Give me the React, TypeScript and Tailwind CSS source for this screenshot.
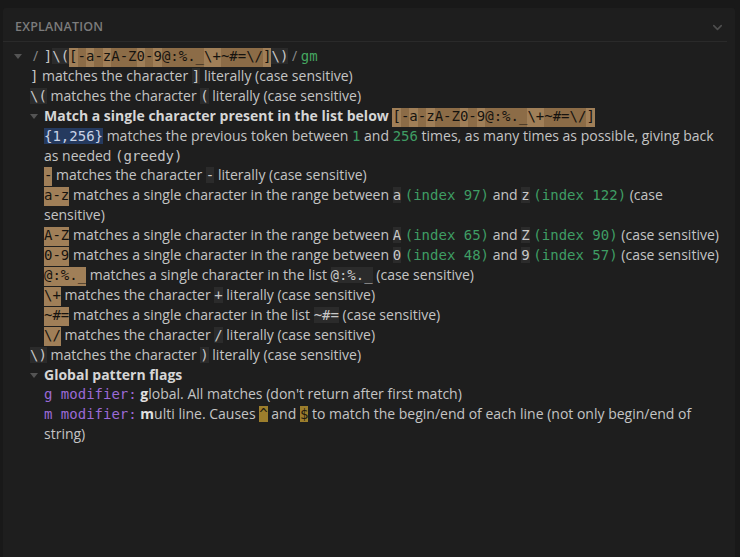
import { ChevronDown } from "lucide-react";
import type { ReactNode } from "react";

const mono = "font-['DejaVu_Sans_Mono',monospace] text-[14px] leading-none";
const chip = `${mono} bg-[#2b2b2b] text-[#c8c8c8]`;
const tan = `${mono} bg-[#a07f58] text-[#16130f] pb-[3px]`;
const tanDark = `${mono} bg-[#8c6c47] text-[#16130f] pb-[3px]`;
const green = `${mono} text-[#3f9d64]`;
const purple = `${mono} text-[#9b6ad6]`;

function Caret() {
  return (
    <svg width="8" height="5" viewBox="0 0 8 5" className="mt-[8px] shrink-0">
      <polygon points="0,0 8,0 4,5" fill="#545454" />
    </svg>
  );
}

function Line({ pl, children }: { pl: string; children: ReactNode }) {
  return <div className={`${pl} pr-[14px]`}>{children}</div>;
}

function CaretLine({ pl, gap, children }: { pl: string; gap: string; children: ReactNode }) {
  return (
    <div className={`flex ${pl} pr-[14px]`}>
      <div className={`${gap} flex shrink-0`}>
        <Caret />
      </div>
      <div className="flex-1">{children}</div>
    </div>
  );
}

// the full character class, with its tokens shaded
function CharClass() {
  return (
    <span className={tan}>
      [<span className={tanDark}>-</span>a<span className={tanDark}>-</span>z
      <span className={tanDark}>A-Z</span>0<span className={tanDark}>-</span>9
      <span className={tanDark}>@:%._</span>\+<span className={tanDark}>~#=</span>
      <span className={tanDark}>\/</span>]
    </span>
  );
}

export default function App() {
  return (
    <div className="min-h-[557px] bg-[#191919] pl-[3px] pr-[5px] pt-[8px] font-['Open_Sans',sans-serif] text-[14px] leading-[19.9px] text-[#c4c4c4]">
      <div className="min-h-[549px] bg-[#1e1e1e] rounded-tl-[3px] rounded-tr-[3px]">
        {/* Header */}
        <div className="mr-[8px] flex h-[34px] items-center justify-between border-b border-[#2a2a2a] pl-[12px] pt-[5px]">
          <span className="text-[12.5px] font-semibold tracking-[0.2px] text-[#7c7c7c]">EXPLANATION</span>
          <ChevronDown size={15} strokeWidth={2.5} className="mr-[2px] text-[#4e4e4e]" />
        </div>

        <div className="pt-[4px]">
          <CaretLine pl="pl-[11px]" gap="w-[19px]">
            <span className="text-[#8a8a8a]">/ </span>
            <span className={`${mono} ml-[2px]`}>]</span>
            <span className={chip}>\(</span>
            <CharClass />
            <span className={chip}>\)</span>
            <span className="text-[#8a8a8a]"> / </span>
            <span className={`${mono} text-[#45a660]`}>gm</span>
          </CaretLine>

          <Line pl="pl-[27px]">
            <span className={mono}>]</span> matches the character <span className={chip}>]</span> literally (case sensitive)
          </Line>
          <Line pl="pl-[27px]">
            <span className={chip}>\(</span> matches the character <span className={chip}>(</span> literally (case sensitive)
          </Line>

          <CaretLine pl="pl-[27px]" gap="w-[14px]">
            <span className="font-bold text-[#d6d6d6]">Match a single character present in the list below </span>
            <CharClass />
          </CaretLine>

          <Line pl="pl-[41px]">
            <span className={`${mono} bg-[#253a5f] text-[#c9d3e6]`}>{"{1,256}"}</span> matches the previous token between{" "}
            <span className={green}>1</span> and <span className={green}>256</span> times, as many times as possible, giving back as
            needed <span className={mono}>(greedy)</span>
          </Line>
          <Line pl="pl-[41px]">
            <span className={tan}>-</span> matches the character <span className={chip}>-</span> literally (case sensitive)
          </Line>
          <Line pl="pl-[41px]">
            <span className={tan}>a-z</span> matches a single character in the range between <span className={chip}>a</span>{" "}
            <span className={green}>(index 97)</span> and <span className={chip}>z</span> <span className={green}>(index 122)</span> (case
            sensitive)
          </Line>
          <Line pl="pl-[41px]">
            <span className={tan}>A-Z</span> matches a single character in the range between <span className={chip}>A</span>{" "}
            <span className={green}>(index 65)</span> and <span className={chip}>Z</span> <span className={green}>(index 90)</span> (case
            sensitive)
          </Line>
          <Line pl="pl-[41px]">
            <span className={tan}>0-9</span> matches a single character in the range between <span className={chip}>0</span>{" "}
            <span className={green}>(index 48)</span> and <span className={chip}>9</span> <span className={green}>(index 57)</span> (case
            sensitive)
          </Line>
          <Line pl="pl-[41px]">
            <span className={tan}>@:%._</span> matches a single character in the list <span className={chip}>@:%._</span> (case sensitive)
          </Line>
          <Line pl="pl-[41px]">
            <span className={tan}>\+</span> matches the character <span className={chip}>+</span> literally (case sensitive)
          </Line>
          <Line pl="pl-[41px]">
            <span className={tan}>~#=</span> matches a single character in the list <span className={chip}>~#=</span> (case sensitive)
          </Line>
          <Line pl="pl-[41px]">
            <span className={tan}>\/</span> matches the character <span className={chip}>/</span> literally (case sensitive)
          </Line>

          <Line pl="pl-[27px]">
            <span className={chip}>\)</span> matches the character <span className={chip}>)</span> literally (case sensitive)
          </Line>

          <CaretLine pl="pl-[27px]" gap="w-[14px]">
            <span className="font-bold text-[#d6d6d6]">Global pattern flags</span>
          </CaretLine>

          <Line pl="pl-[41px]">
            <span className={purple}>g modifier:</span> <span className="font-bold text-[#e0e0e0]">g</span>lobal. All matches (don't
            return after first match)
          </Line>
          <Line pl="pl-[41px]">
            <span className={purple}>m modifier:</span> <span className="font-bold text-[#e0e0e0]">m</span>ulti line. Causes{" "}
            <span className={`${mono} bg-[#9c7e2c] text-[#1d1a10]`}>^</span> and{" "}
            <span className={`${mono} bg-[#9c7e2c] text-[#1d1a10]`}>$</span> to match the begin/end of each line (not only begin/end of
            string)
          </Line>
        </div>
      </div>
    </div>
  );
}
